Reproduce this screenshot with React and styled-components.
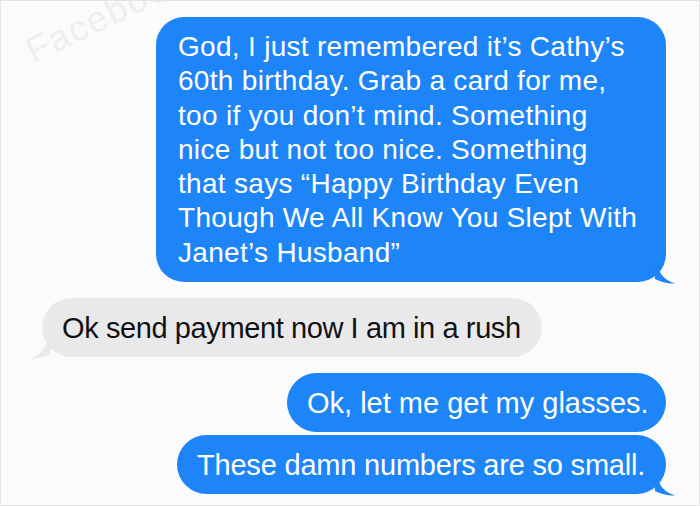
import React from "react";
import styled, { createGlobalStyle } from "styled-components";

const Global = createGlobalStyle`
  html, body { margin: 0; padding: 0; background: #fbfbfb; }
  body { font-family: "Liberation Sans", Arial, sans-serif; }
`;

const Screen = styled.div`
  position: relative;
  box-sizing: border-box;
  width: 700px;
  height: 506px;
  overflow: hidden;
  background: #fbfbfc;
  border: 1px solid #e4e4e6;
  padding: 16px 33px 0 41px;
  display: flex;
  flex-direction: column;
`;

const Watermark = styled.div`
  position: absolute;
  left: 36px;
  top: 30px;
  line-height: 40px;
  transform: rotate(-26deg);
  transform-origin: left bottom;
  font-size: 36px;
  letter-spacing: 2px;
  color: rgba(185, 185, 185, 0.2);
  font-family: "Liberation Sans", Arial, sans-serif;
  pointer-events: none;
`;

const Row = styled.div`
  display: flex;
  justify-content: ${(p) => (p.$out ? "flex-end" : "flex-start")};
  margin-top: ${(p) => p.$gap}px;
`;

const Bubble = styled.div`
  position: relative;
  box-sizing: border-box;
  background: ${(p) => (p.$out ? "#1d85f8" : "#e9e9eb")};
  color: ${(p) => (p.$out ? "#ffffff" : "#111111")};
  border-radius: ${(p) => (p.$big ? "28px" : "30px")};
  padding: ${(p) => (p.$big ? "13px 20px 12px 22px" : "0 20px")};
  height: ${(p) => (p.$big ? "auto" : "59px")};
  width: ${(p) => (p.$w ? p.$w + "px" : "auto")};
  display: flex;
  align-items: center;
  font-size: ${(p) => (p.$big ? "28px" : "29px")};
  line-height: ${(p) => (p.$big ? "34.3px" : "32px")};
  letter-spacing: ${(p) => p.$ls || "0px"};
  white-space: nowrap;
`;

const Tail = styled.svg`
  position: absolute;
  bottom: -2px;
  ${(p) => (p.$out ? "right: -10px;" : "left: -13px;")}
  width: 22px;
  height: 22px;
`;

const TailShape = ({ out, color }) => (
  <Tail $out={out} viewBox="0 0 22 22">
    {out ? (
      <path d="M0 0 L4 0 C4 10 8 17 21 21.5 C12 21.5 6 19.5 1 17 Z" fill={color} />
    ) : (
      <path d="M22 0 L18 0 C18 10 14 17 1 21.5 C10 21.5 16 19.5 21 17 Z" fill={color} />
    )}
  </Tail>
);

export default function App() {
  return (
    <>
      <Global />
      <Screen>
        <Watermark>Facebook</Watermark>
        <Row $out $gap={0}>
          <Bubble $out $big $w={510} $ls="0.3px">
            <div>
              God, I just remembered it’s Cathy’s
              <br />
              60th birthday. Grab a card for me,
              <br />
              too if you don’t mind. Something
              <br />
              nice but not too nice. Something
              <br />
              that says “Happy Birthday Even
              <br />
              Though We All Know You Slept With
              <br />
              Janet’s Husband”
            </div>
            <TailShape out color="#1d85f8" />
          </Bubble>
        </Row>
        <Row $gap={16}>
          <Bubble $w={500} $ls="-0.4px">
            Ok send payment now I am in a rush
            <TailShape color="#e9e9eb" />
          </Bubble>
        </Row>
        <Row $out $gap={16}>
          <Bubble $out $w={379} $ls="0px">
            Ok, let me get my glasses.
          </Bubble>
        </Row>
        <Row $out $gap={3}>
          <Bubble $out $w={489} $ls="-0.2px">
            These damn numbers are so small.
            <TailShape out color="#1d85f8" />
          </Bubble>
        </Row>
      </Screen>
    </>
  );
}
